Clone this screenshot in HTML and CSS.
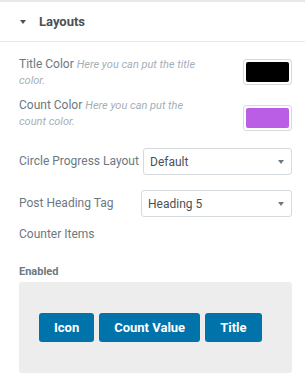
FILE: index.html
```html
<!DOCTYPE html>
<html>
<head>
<meta charset="utf-8">
<link rel="stylesheet" href="styles.css">
</head>
<body>
<div class="panel">
  <div class="section-head">
    <span class="caret"></span>
    <span class="section-title">Layouts</span>
  </div>
  <div class="content">
    <div class="row color-row first">
      <div class="label">Title Color <em class="desc">Here you can put the title color.</em></div>
      <div class="swatch sw1"><span class="fill black"></span></div>
    </div>
    <div class="row color-row second">
      <div class="label">Count Color <em class="desc">Here you can put the count color.</em></div>
      <div class="swatch sw2"><span class="fill purple"></span></div>
    </div>
    <div class="row select-row sel1">
      <div class="label">Circle Progress Layout</div>
      <div class="select w1"><span>Default</span><span class="arrow"></span></div>
    </div>
    <div class="row select-row sel2">
      <div class="label">Post Heading Tag</div>
      <div class="select w2"><span>Heading 5</span><span class="arrow"></span></div>
    </div>
    <div class="plain-label">Counter Items</div>
    <div class="small-head">Enabled</div>
    <div class="items-box">
      <button class="item">Icon</button>
      <button class="item">Count Value</button>
      <button class="item">Title</button>
    </div>
  </div>
</div>
</body>
</html>
```

FILE: styles.css
```css
* { box-sizing: border-box; }
html, body { margin: 0; padding: 0; background: #fff; }
body { font-family: Roboto, "Liberation Sans", sans-serif; color: #6d7882; }
.panel { border-top: 2px solid #e6e9ec; width: 305px; }
.section-head {
  height: 40px;
  display: flex;
  align-items: center;
  padding-left: 20px;
  border-bottom: 1px solid #e6e9ec;
}
.caret {
  width: 0; height: 0;
  border-left: 3px solid transparent;
  border-right: 3px solid transparent;
  border-top: 4px solid #495157;
  margin-right: 13px;
  margin-top: 1px;
}
.section-title { font-weight: 700; font-size: 13px; color: #495157; }
.content { padding: 0 13px 0 19px; }
.row { display: flex; align-items: center; }
.label { font-size: 12px; line-height: 14.5px; color: #6d7882; }
.desc { font-size: 11px; color: #a4afb7; font-style: italic; }
.color-row { justify-content: space-between; align-items: flex-start; }
.color-row .label { width: 185px; }
.first { margin-top: 15px; }
.second { margin-top: 10px; }
.swatch {
  width: 49px; height: 26px;
  border: 1px solid #d5dadf;
  border-radius: 3px;
  padding: 2px;
  flex: none;
}
.sw1 { margin-top: 2px; }
.sw2 { margin-top: 7px; }
.fill { display: block; width: 100%; height: 100%; border-radius: 2px; }
.black { background: #000; }
.purple { background: #b95ee5; }
.select-row { justify-content: space-between; }
.sel1 { margin-top: 17px; }
.sel2 { margin-top: 15px; }
.select {
  height: 27px;
  border: 1px solid #d5dadf;
  border-radius: 3px;
  display: flex;
  align-items: center;
  justify-content: space-between;
  padding: 0 6px 0 6px;
  font-size: 12px;
  color: #495157;
}
.w1 { width: 149px; }
.w2 { width: 151px; }
.arrow {
  width: 0; height: 0;
  border-left: 3.5px solid transparent;
  border-right: 3.5px solid transparent;
  border-top: 4px solid #6d7882;
  margin-right: 1px;
}
.plain-label { font-size: 12px; line-height: 14.4px; margin-top: 10px; }
.small-head { font-size: 11px; font-weight: 700; margin-top: 24px; line-height: 13px; }
.items-box {
  margin-top: 4px;
  height: 91px;
  background: #ededed;
  border-radius: 3px;
  display: flex;
  align-items: center;
  gap: 5px;
  padding-left: 20px;
}
.item {
  background: #0073aa;
  color: #fff;
  border: 0;
  border-radius: 3px;
  height: 29px;
  padding: 0 15px;
  font-family: Roboto, "Liberation Sans", sans-serif;
  font-weight: 700;
  font-size: 13px;
}
```
